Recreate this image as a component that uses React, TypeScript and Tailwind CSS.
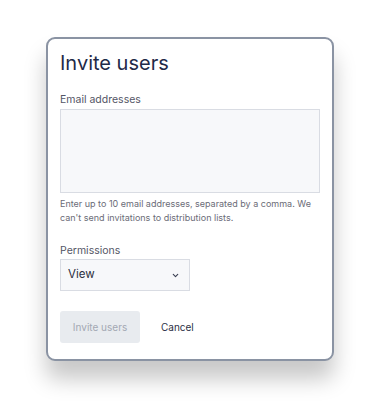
import { ChevronDown } from "lucide-react";

const App = () => {
  return (
    <div
      className="min-h-[404px] w-[376px] bg-white pl-[46px] pt-[37px]"
      style={{ fontFamily: "Inter, 'Noto Sans', sans-serif" }}
    >
      <div className="w-[288px] h-[324px] rounded-[9px] border-2 border-[#8a93a3] bg-white px-3 pt-[10px] shadow-[0_18px_22px_rgba(0,0,0,0.22)]">
        <h1 className="text-[20px] leading-[28px] text-[#1f2a48]">Invite users</h1>

        <label className="block mt-[15px] text-[10.5px] leading-[16px] text-[#545666]">
          Email addresses
        </label>
        <textarea className="block mt-[1px] w-full h-[84px] resize-none border border-[#d9dce3] bg-[#f7f8fa] outline-none" />
        <p className="mt-[4px] text-[9px] leading-[14px] text-[#6b6c77]">
          Enter up to 10 email addresses, separated by a comma. We can't send invitations to distribution lists.
        </p>

        <label className="block mt-[18px] text-[10.5px] leading-[16px] text-[#545666]">
          Permissions
        </label>
        <button
          type="button"
          className="flex items-center justify-between w-[130px] h-[32px] pl-[7px] pr-[9px] border border-[#d9dce3] bg-[#f7f8fa] text-[11.5px] text-[#2b2f40]"
        >
          <span>View</span>
          <ChevronDown className="w-[9px] h-[9px] text-[#3a3f52]" strokeWidth={3} />
        </button>

        <div className="mt-[20px] flex items-center gap-[21px]">
          <button
            type="button"
            className="w-[80px] h-[32px] rounded-[3px] bg-[#e8ebef] text-[10px] text-[#a3a8b3]"
          >
            Invite users
          </button>
          <button type="button" className="text-[10px] text-[#2b2f45]">
            Cancel
          </button>
        </div>
      </div>
    </div>
  );
};

export default App;
